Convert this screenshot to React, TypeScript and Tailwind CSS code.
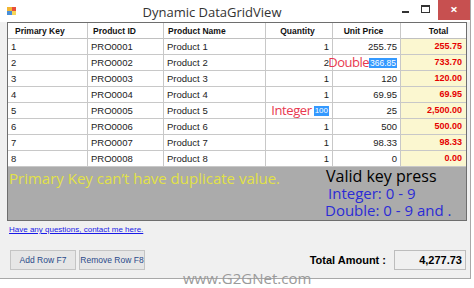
import React from "react";

const rows = [
  ["1", "PRO0001", "Product 1", "1", "255.75", "255.75"],
  ["2", "PRO0002", "Product 2", "2", "366.85", "733.70"],
  ["3", "PRO0003", "Product 3", "1", "120", "120.00"],
  ["4", "PRO0004", "Product 4", "1", "69.95", "69.95"],
  ["5", "PRO0005", "Product 5", "100", "25", "2,500.00"],
  ["6", "PRO0006", "Product 6", "1", "500", "500.00"],
  ["7", "PRO0007", "Product 7", "1", "98.33", "98.33"],
  ["8", "PRO0008", "Product 8", "1", "0", "0.00"],
];

const cellFont = { fontFamily: "'Liberation Sans', Arial, sans-serif" };
const uiFont = { fontFamily: "'Open Sans', 'Noto Sans', sans-serif" };

const cols = "grid grid-cols-[80px_76px_102px_67px_68px_65px]";

export default function App() {
  return (
    <div className="relative w-[474px] h-[288px] bg-white overflow-hidden">
      <div className="w-[471px] h-[279px] bg-[#f0f0f0] border-r border-b border-[#a8a8a8] flex flex-col">
        {/* title bar */}
        <div className="h-[22px] bg-white flex items-start relative">
          <div className="mt-[7px] ml-[7px] w-[9px] h-[8px] relative">
            <div className="absolute left-0 top-0 w-[5px] h-[4px] bg-[#f2b632]" />
            <div className="absolute right-0 top-0 w-[4px] h-[4px] bg-[#e94e3a]" />
            <div className="absolute left-0 bottom-0 w-[5px] h-[4px] bg-[#4a8fd8]" />
            <div className="absolute right-0 bottom-0 w-[4px] h-[4px] bg-[#f5d659]" />
          </div>
          <div className="flex-1 text-center text-[13px] text-[#333] mt-[3px] pl-[10px]" style={uiFont}>
            Dynamic DataGridView
          </div>
          <div className="flex items-start">
            <div className="w-[16px] h-[20px] relative mr-[4px]">
              <div className="absolute left-[4px] top-[11px] w-[7px] h-[2px] bg-[#333]" />
            </div>
            <div className="w-[20px] h-[20px] relative">
              <div className="absolute left-[3px] top-[5px] w-[9px] h-[8px] border border-[#333] border-t-2" />
            </div>
            <div className="w-[32px] h-[20px] bg-[#c75050] flex items-center justify-center text-white text-[13px] font-bold" style={uiFont}>
              ×
            </div>
          </div>
        </div>

        {/* grid */}
        <div className="ml-[7px] w-[460px] border border-[#6e6e6e] bg-[#ababab]" style={cellFont}>
          <div className={`${cols} bg-white text-[8.5px] font-bold h-[16px] border-b border-[#c0c0c0] text-[#111]`}>
            <div className="pl-[7px] border-r border-[#c8c8c8] leading-[16px]">Primary Key</div>
            <div className="pl-[5px] border-r border-[#c8c8c8] leading-[16px]">Product ID</div>
            <div className="pl-[4px] border-r border-[#c8c8c8] leading-[16px]">Product Name</div>
            <div className="text-center border-r border-[#c8c8c8] leading-[16px] pr-[3px]">Quantity</div>
            <div className="text-center border-r border-[#c8c8c8] leading-[16px] pr-[6px]">Unit Price</div>
            <div className="text-center leading-[16px] pl-[10px]">Total</div>
          </div>
          {rows.map((r, i) => (
            <div
              key={i}
              className={`${cols} bg-white text-[9.5px] h-[16px] border-b border-[#c8c8c8] text-[#222]`}
            >
              <div className="pl-[3px] border-r border-[#c8c8c8] leading-[15px]">{r[0]}</div>
              <div className="pl-[3px] border-r border-[#c8c8c8] leading-[15px]">{r[1]}</div>
              <div className="pl-[3px] border-r border-[#c8c8c8] leading-[15px]">{r[2]}</div>
              <div className="pr-[3px] border-r border-[#c8c8c8] leading-[15px] flex justify-end items-center whitespace-nowrap">
                {i === 4 ? (
                  <>
                    <span className="text-[13px] tracking-[-0.4px] text-[#e8384f] leading-[15px] mr-[2px]" style={uiFont}>Integer</span>
                    <span className="bg-[#3399ff] text-white text-[8px] leading-[10px] px-[1px]">100</span>
                  </>
                ) : (
                  r[3]
                )}
              </div>
              <div className="pr-[3px] border-r border-[#c8c8c8] leading-[15px] flex justify-end items-center whitespace-nowrap">
                {i === 1 ? (
                  <span className="flex items-center">
                    <span className="text-[13px] tracking-[-0.5px] text-[#e8384f] leading-[15px]" style={uiFont}>Double</span>
                    <span className="bg-[#3399ff] text-white text-[8.5px] leading-[10px] px-[1px]">366.85</span>
                  </span>
                ) : (
                  r[4]
                )}
              </div>
              <div className="pr-[4px] bg-[#fbf7d0] text-right font-bold text-[9px] text-[#e50000] leading-[15px]">{r[5]}</div>
            </div>
          ))}
          <div className="h-[53px] flex" style={uiFont}>
            <div className="text-[15px] leading-[20px] text-[#e2e246] pl-[1px] pt-[1px] w-[318px]">
              Primary Key can’t have duplicate value.
            </div>
            <div className="flex flex-col">
              <div className="text-[16px] leading-[18px] text-black">Valid key press</div>
              <div className="text-[15px] leading-[17px] text-[#2b2bd6] pl-[2px]">Integer: 0 - 9</div>
              <div className="text-[15px] leading-[17px] text-[#2b2bd6] -ml-[1px]">Double: 0 - 9 and .</div>
            </div>
          </div>
        </div>

        {/* link */}
        <div className="ml-[9px] mt-[3px] text-[8px] text-[#1a1ae6] underline leading-[12px]" style={cellFont}>
          Have any questions, contact me here.
        </div>

        {/* bottom */}
        <div className="flex items-center mt-[14px]">
          <button className="ml-[10px] w-[66px] h-[20px] border border-[#c4c4c4] bg-[#e6e6e6] text-[8.5px] text-[#2a4a8a] whitespace-nowrap" style={cellFont}>
            Add Row F7
          </button>
          <button className="ml-[3px] w-[66px] h-[20px] border border-[#c4c4c4] bg-[#e6e6e6] text-[8.5px] text-[#2a4a8a] whitespace-nowrap" style={cellFont}>
            Remove Row F8
          </button>
          <div className="flex-1" />
          <div className="text-[11px] font-bold text-black mr-[8px]" style={cellFont}>
            Total Amount :
          </div>
          <div className="w-[72px] h-[20px] border border-[#bdbdbd] bg-[#f0f0f0] text-right pr-[3px] text-[11px] font-bold leading-[18px] mr-[4px]" style={cellFont}>
            4,277.73
          </div>
        </div>
      </div>

      {/* watermark */}
      <div className="absolute left-[183px] top-[269px] text-[15px] text-[#9a9a9a] leading-[18px]" style={uiFont}>
        www.G2GNet.com
      </div>
    </div>
  );
}
